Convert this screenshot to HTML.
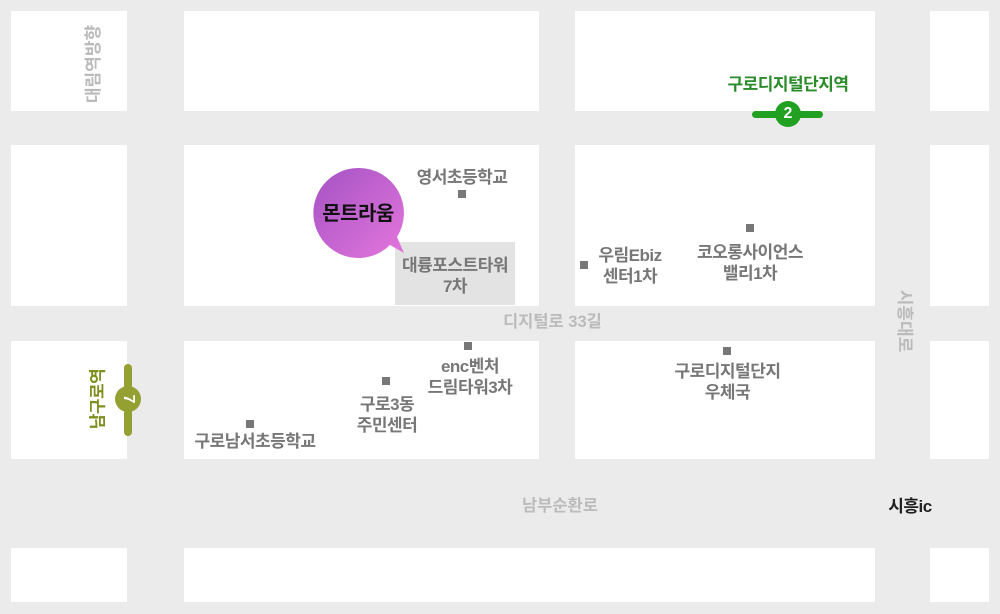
<!DOCTYPE html>
<html><head><meta charset="utf-8"><style>
*{margin:0;padding:0}
body{width:1000px;height:614px;background:#ebebeb;position:relative;overflow:hidden;font-family:"Liberation Sans","Noto Sans CJK KR",sans-serif}
.b{position:absolute;background:#fff}
.t{position:absolute;color:#777;font-size:17px;font-weight:bold;line-height:21px;text-align:center;white-space:nowrap;letter-spacing:-0.5px}
.r{position:absolute;color:#bbb;font-size:16.5px;font-weight:bold;white-space:nowrap;line-height:18px}
.sq{position:absolute;width:8px;height:8px;background:#777}
</style></head><body>
<div class="b" style="left:11px;top:11px;width:116px;height:100px"></div>
<div class="b" style="left:184px;top:11px;width:355px;height:100px"></div>
<div class="b" style="left:575px;top:11px;width:300px;height:100px"></div>
<div class="b" style="left:930px;top:11px;width:59px;height:100px"></div>
<div class="b" style="left:11px;top:145px;width:116px;height:161px"></div>
<div class="b" style="left:184px;top:145px;width:355px;height:161px"></div>
<div class="b" style="left:575px;top:145px;width:300px;height:161px"></div>
<div class="b" style="left:930px;top:145px;width:59px;height:161px"></div>
<div class="b" style="left:11px;top:341px;width:116px;height:118px"></div>
<div class="b" style="left:184px;top:341px;width:355px;height:118px"></div>
<div class="b" style="left:575px;top:341px;width:300px;height:118px"></div>
<div class="b" style="left:930px;top:341px;width:59px;height:118px"></div>
<div class="b" style="left:11px;top:548px;width:116px;height:54px"></div>
<div class="b" style="left:184px;top:548px;width:691px;height:54px"></div>
<div class="b" style="left:930px;top:548px;width:59px;height:54px"></div>

<div style="position:absolute;left:395px;top:242px;width:120px;height:63px;background:#e3e3e3"></div>
<div class="t" style="left:395px;top:255px;width:120px">대륭포스트타워<br>7차</div>

<svg style="position:absolute;left:312px;top:166px" width="100" height="95">
<defs><linearGradient id="g" x1="0" y1="0" x2="1" y2="1"><stop offset="0" stop-color="#a452c4"/><stop offset="1" stop-color="#e476dc"/></linearGradient></defs>
<path d="M46 2 A45 45 0 1 0 78 79 L92 87 L85 71 A45 45 0 0 0 46 2Z" fill="url(#g)"/>
<text x="46" y="54" text-anchor="middle" font-family="Liberation Sans,Noto Sans CJK KR,sans-serif" font-size="20" font-weight="bold" fill="#111" letter-spacing="-0.5">몬트라움</text>
</svg>

<div class="t" style="left:402px;top:167px;width:120px">영서초등학교</div>
<div class="sq" style="left:458px;top:190px"></div>
<div class="sq" style="left:580px;top:261px"></div>
<div class="t" style="left:590px;top:245px;width:80px">우림Ebiz<br>센터1차</div>
<div class="sq" style="left:746px;top:224px"></div>
<div class="t" style="left:685px;top:242px;width:130px">코오롱사이언스<br>밸리1차</div>
<div class="r" style="left:503px;top:313px">디지털로 33길</div>
<div class="sq" style="left:464px;top:342px"></div>
<div class="t" style="left:405px;top:356px;width:130px">enc벤처<br>드림타워3차</div>
<div class="sq" style="left:382px;top:377px"></div>
<div class="t" style="left:322px;top:394px;width:130px">구로3동<br>주민센터</div>
<div class="sq" style="left:246px;top:420px"></div>
<div class="t" style="left:175px;top:431px;width:160px">구로남서초등학교</div>
<div class="sq" style="left:723px;top:347px"></div>
<div class="t" style="left:660px;top:361px;width:135px">구로디지털단지<br>우체국</div>
<div class="r" style="left:522px;top:497px">남부순환로</div>
<div class="t" style="left:880px;top:496px;width:60px;color:#222">시흥ic</div>

<div class="r" style="left:94px;top:64px;transform:translate(-50%,-50%) rotate(-90deg);font-size:17px">대림역방향</div>
<div class="r" style="left:904px;top:321px;transform:translate(-50%,-50%) rotate(90deg);font-size:17px">시흥대로</div>

<div class="t" style="left:713px;top:74px;width:150px;color:#2a8c2a">구로디지털단지역</div>
<div style="position:absolute;left:752px;top:111px;width:71px;height:7px;border-radius:4px;background:#22a022"></div>
<div style="position:absolute;left:775px;top:101px;width:26px;height:26px;border-radius:50%;background:#22a022;color:#fff;font-weight:bold;font-size:16px;line-height:26px;text-align:center">2</div>

<div class="t" style="left:98px;top:399px;transform:translate(-50%,-50%) rotate(-90deg);color:#7f8f1f">남구로역</div>
<div style="position:absolute;left:124px;top:364px;width:8px;height:72px;border-radius:4px;background:#94a032"></div>
<div style="position:absolute;left:115px;top:386px;width:26px;height:26px;border-radius:50%;background:#94a032;color:#fff;font-weight:bold;font-size:16px;line-height:26px;text-align:center;transform:rotate(90deg)">7</div>
</body></html>
